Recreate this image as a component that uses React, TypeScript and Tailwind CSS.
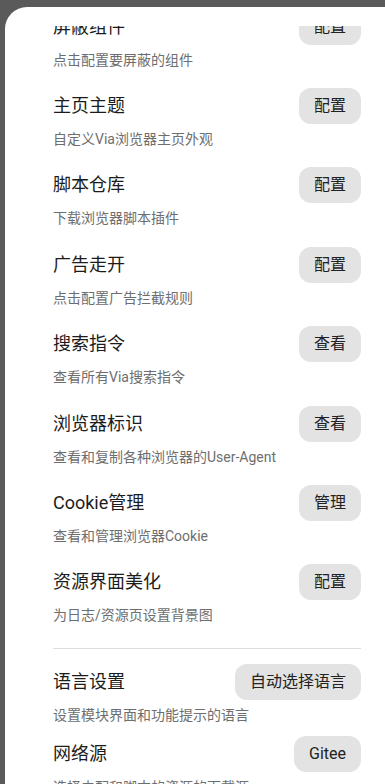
import React from "react";

type Item = { title: string; desc: string; btn: string };

const items: Item[] = [
  { title: "屏蔽组件", desc: "点击配置要屏蔽的组件", btn: "配置" },
  { title: "主页主题", desc: "自定义Via浏览器主页外观", btn: "配置" },
  { title: "脚本仓库", desc: "下载浏览器脚本插件", btn: "配置" },
  { title: "广告走开", desc: "点击配置广告拦截规则", btn: "配置" },
  { title: "搜索指令", desc: "查看所有Via搜索指令", btn: "查看" },
  { title: "浏览器标识", desc: "查看和复制各种浏览器的User-Agent", btn: "查看" },
  { title: "Cookie管理", desc: "查看和管理浏览器Cookie", btn: "管理" },
  { title: "资源界面美化", desc: "为日志/资源页设置背景图", btn: "配置" },
];

function Row({ item, pb }: { item: Item; pb: string }) {
  return (
    <div className={`flex flex-col ${pb}`}>
      <div className="flex h-[36px] items-center justify-between">
        <span className="text-[18px] leading-[24px] text-[#1c1c1c]">{item.title}</span>
        <button className="h-[36px] rounded-[12px] bg-[#e3e3e3] px-[15px] text-[16px] leading-[20px] text-[#222222]">
          {item.btn}
        </button>
      </div>
      <div className="mt-[5px] text-[14px] leading-[20px] text-[#6e6e6e]">{item.desc}</div>
    </div>
  );
}

export default function App() {
  return (
    <div
      className="h-[784px] w-[385px] overflow-hidden bg-[#5a5a5a]"
      style={{ fontFamily: 'Roboto, "Noto Sans CJK SC", sans-serif' }}
    >
      <div className="ml-[5px] mt-[7px] h-[800px] w-[420px] rounded-tl-[22px] bg-white pt-[19px]">
        <div className="h-[760px] w-[380px] overflow-hidden">
          <div className="mt-[-17.4px] pl-[48px] pr-[24px]">
            {items.map((it) => (
              <Row key={it.title} item={it} pb="pb-[18.4px]" />
            ))}
            <div className="mt-[4px] h-px bg-[#dedede]" />
            <div className="pt-[15px]">
              <Row
                item={{ title: "语言设置", desc: "设置模块界面和功能提示的语言", btn: "自动选择语言" }}
                pb="pb-[11px]"
              />
              <Row
                item={{ title: "网络源", desc: "选择未配和脚本的资源的下载源", btn: "Gitee" }}
                pb="pb-[11px]"
              />
            </div>
          </div>
        </div>
      </div>
    </div>
  );
}
